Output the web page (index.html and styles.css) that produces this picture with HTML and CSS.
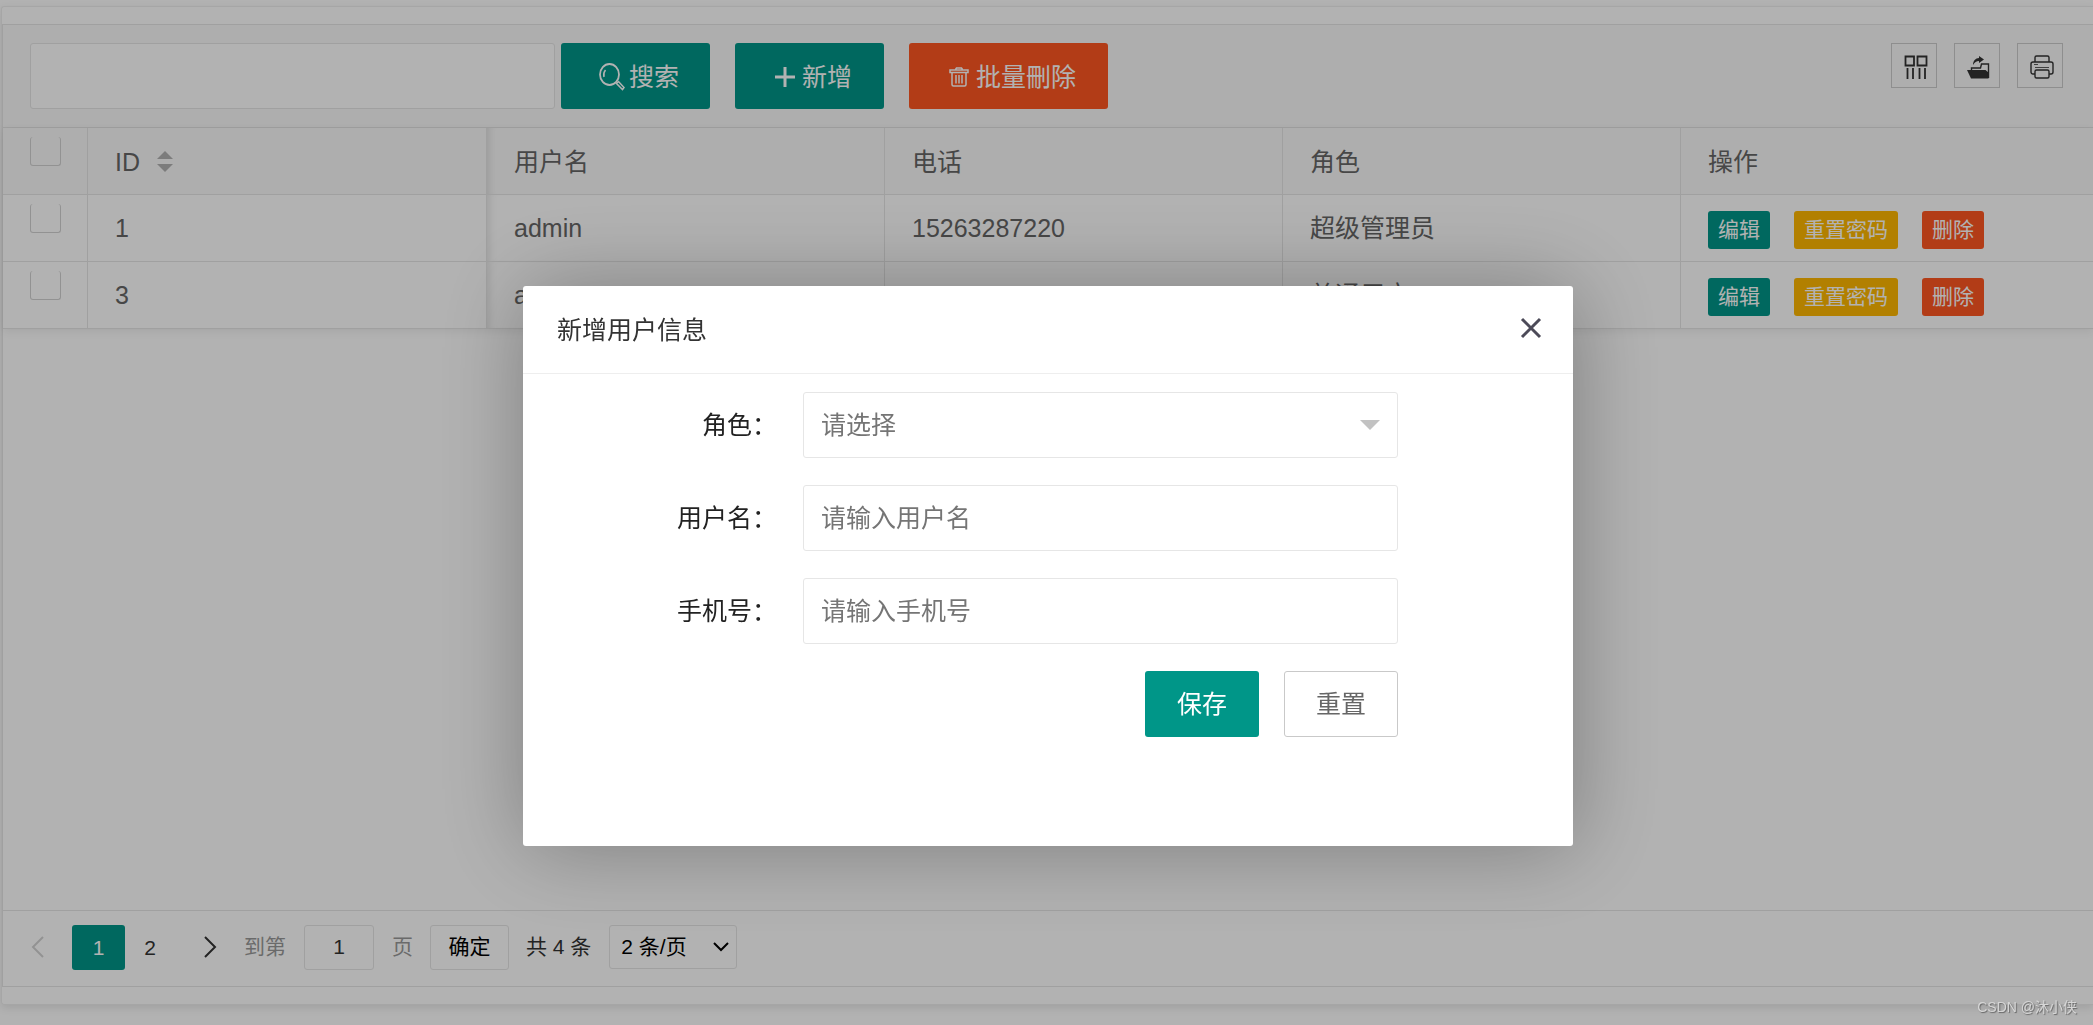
FILE: index.html
```html
<!DOCTYPE html>
<html lang="zh-CN">
<head>
<meta charset="utf-8">
<title>用户管理</title>
<link rel="stylesheet" href="styles.css">
</head>
<body>
<main class="page">
  <section class="card">
    <div class="table-view">
      <div class="toolbar">
        <form class="toolbar-left">
          <input class="input search-input" type="text" aria-label="搜索">
          <button class="btn btn-primary btn-search" type="button">
            <svg class="icon-search" viewBox="0 0 26 28" aria-hidden="true"><ellipse cx="10.500" cy="11.500" rx="9.500" ry="10.500" fill="none" stroke="currentColor" stroke-width="1.800"/><path d="M5 14a6 7 0 0 1 1.500-7M17.500 20.500l2-2 5.500 6-1.500 2z" fill="none" stroke="currentColor" stroke-width="1.500"/></svg>
            搜索
          </button>
          <button class="btn btn-primary" type="button">
            <svg class="icon-add" viewBox="0 0 20 20" aria-hidden="true"><path d="M10 0v20M0 10h20" stroke="currentColor" stroke-width="3"/></svg>
            新增
          </button>
          <button class="btn btn-danger" type="button">
            <svg class="icon-trash" viewBox="0 0 20 20" aria-hidden="true"><path d="M1 5.500V3h18v2.500zM6.500 2.500L7.500 1h5l1 1.500M3 6v11.500A1.500 1.500 0 0 0 4.500 19h11a1.500 1.500 0 0 0 1.500-1.500V6M7 8v8.500M10 8v8.500M13 8v8.500" fill="none" stroke="currentColor" stroke-width="1.500"/></svg>
            批量刪除
          </button>
        </form>
        <div class="toolbar-right">
          <button class="tool" type="button" aria-label="筛选列">
            <svg viewBox="0 0 24 24" aria-hidden="true"><path d="M1.500 1.500h8.500v9H1.500zM13.500 1.500h9v9h-9zM3.500 13v11M9 13v11M15.500 13v11M21 13v11" fill="none" stroke="currentColor" stroke-width="1.800"/></svg>
          </button>
          <button class="tool" type="button" aria-label="导出">
            <svg viewBox="0 0 24 24" aria-hidden="true"><path d="M0 15h18.500l3 2.500V23.500H4z" fill="currentColor"/><path d="M4.500 15v-2h9l1-4h7v14" fill="none" stroke="currentColor" stroke-width="1.400"/><path d="M6 10c0-4 2.500-7 6-7V1l5 3.500-5 3.500V6C9.500 6 7.500 7.500 6 10z" fill="currentColor"/></svg>
          </button>
          <button class="tool" type="button" aria-label="打印">
            <svg viewBox="0 0 24 24" aria-hidden="true"><path d="M5 7V2.500A1.500 1.500 0 0 1 6.500 1h11A1.500 1.500 0 0 1 19 2.500V7M5 19H3a2 2 0 0 1-2-2V9a2 2 0 0 1 2-2h18a2 2 0 0 1 2 2v8a2 2 0 0 1-2 2h-2M5 16.500A1.500 1.500 0 0 1 6.500 15h11a1.500 1.500 0 0 1 1.500 1.500v5a1.500 1.500 0 0 1-1.500 1.500h-11A1.500 1.500 0 0 1 5 21.500z" fill="none" stroke="currentColor" stroke-width="1.400"/><path d="M4 9.500h4M5 12.500h14" stroke="currentColor" stroke-width=".8"/></svg>
          </button>
        </div>
      </div>

      <div class="table-body">
        <table class="table">
          <colgroup><col class="col-check"><col class="col-id"><col class="col-data"><col class="col-data"><col class="col-data"><col></colgroup>
          <thead>
            <tr>
              <th class="cell-check"><input class="check" type="checkbox" aria-label="全选"></th>
              <th><span class="sortable">ID <svg class="icon-sort" viewBox="0 0 16 22" aria-hidden="true"><path d="M0 8l8-8 8 8zM0 13h16l-8 8z" fill="currentColor"/></svg></span></th>
              <th class="cell-after">用户名</th>
              <th>电话</th>
              <th>角色</th>
              <th>操作</th>
            </tr>
          </thead>
          <tbody>
            <tr>
              <td class="cell-check"><input class="check" type="checkbox" aria-label="选择 1"></td>
              <td>1</td>
              <td class="cell-after">admin</td>
              <td>15263287220</td>
              <td>超级管理员</td>
              <td><div class="actions"><button class="btn-xs btn-primary" type="button">编辑</button><button class="btn-xs btn-warm" type="button">重置密码</button><button class="btn-xs btn-danger" type="button">删除</button></div></td>
            </tr>
            <tr>
              <td class="cell-check"><input class="check" type="checkbox" aria-label="选择 3"></td>
              <td>3</td>
              <td class="cell-after">a</td>
              <td></td>
              <td>普通用户</td>
              <td><div class="actions"><button class="btn-xs btn-primary" type="button">编辑</button><button class="btn-xs btn-warm" type="button">重置密码</button><button class="btn-xs btn-danger" type="button">删除</button></div></td>
            </tr>
          </tbody>
        </table>
      </div>

      <nav class="pager" aria-label="分页">
        <button class="pager-arrow is-disabled" type="button" aria-label="上一页" disabled><svg viewBox="0 0 14 22" aria-hidden="true"><path d="M12 1L2 11l10 10" fill="none" stroke="currentColor" stroke-width="2"/></svg></button>
        <a class="pager-page is-current" href="#">1</a>
        <a class="pager-page" href="#">2</a>
        <button class="pager-arrow pager-next" type="button" aria-label="下一页"><svg viewBox="0 0 14 22" aria-hidden="true"><path d="M2 1l10 10L2 21" fill="none" stroke="currentColor" stroke-width="2"/></svg></button>
        <label class="pager-muted" for="page-no">到第</label>
        <input class="pager-input" id="page-no" type="text" value="1">
        <span class="pager-muted">页</span>
        <button class="pager-go" type="button">确定</button>
        <span class="pager-count">共 4 条</span>
        <span class="pager-limit">
          <select aria-label="每页条数"><option>2 条/页</option></select>
          <svg viewBox="0 0 16 10" aria-hidden="true"><path d="M1 1l7 7 7-7" fill="none" stroke="currentColor" stroke-width="2"/></svg>
        </span>
      </nav>
    </div>
  </section>
</main>

<div class="shade">
  <div class="modal" role="dialog" aria-labelledby="modal-title">
    <header class="modal-head">
      <h2 class="modal-title" id="modal-title">新增用户信息</h2>
      <button class="modal-close" type="button" aria-label="关闭"><svg viewBox="0 0 22 22" aria-hidden="true"><path d="M2 2l18 18M20 2L2 20" stroke="currentColor" stroke-width="3"/></svg></button>
    </header>
    <form class="form">
      <div class="form-row">
        <label for="role">角色：</label>
        <span class="select-wrap">
          <select class="input" id="role"><option>请选择</option></select>
          <svg viewBox="0 0 20 10" aria-hidden="true"><path d="M0 0h20L10 10z" fill="currentColor"/></svg>
        </span>
      </div>
      <div class="form-row">
        <label for="username">用户名：</label>
        <input class="input" id="username" type="text" placeholder="请输入用户名">
      </div>
      <div class="form-row">
        <label for="phone">手机号：</label>
        <input class="input" id="phone" type="text" placeholder="请输入手机号">
      </div>
      <div class="form-actions">
        <button class="btn btn-primary btn-form" type="button">保存</button>
        <button class="btn btn-plain btn-form" type="reset">重置</button>
      </div>
    </form>
  </div>
</div>
<div class="watermark">CSDN @沐小侠</div>
</body>
</html>
```
FILE: styles.css
```css
* {
  box-sizing: border-box;
}

body {
  margin: 0;
  background: #fff;
  color: #333;
  font: 25px/42px "Liberation Sans", "Noto Sans CJK SC", sans-serif;
}

button,
input,
select {
  margin: 0;
  font: inherit;
}

svg {
  display: block;
  flex: none;
}

/* page shell */
.page {
  display: flex;
  height: 100vh;
  padding: 6px 0 20px 1px;
  overflow: hidden;
}

.card {
  display: flex;
  flex: 1;
  padding: 17px 0;
  border: 1px solid #eee;
  border-right: 0;
  border-radius: 3px 0 0 3px;
  box-shadow: 0 3px 9px rgba(0, 0, 0, .1);
}

.table-view {
  display: flex;
  flex: 1;
  flex-direction: column;
  border: 1px solid #e6e6e6;
  border-right: 0;
}

/* toolbar */
.toolbar {
  display: flex;
  justify-content: space-between;
  align-items: flex-start;
  padding: 18px 30px 18px 27px;
  border-bottom: 1px solid #e6e6e6;
  background: #fafafa;
}

.toolbar-left {
  display: flex;
  gap: 25px;
}

.input {
  width: 100%;
  height: 66px;
  padding: 0 17px;
  border: 1px solid #e6e6e6;
  border-radius: 3px;
  outline: 0;
  background: #fff;
  color: #757575;
}

.input::placeholder {
  color: #757575;
  opacity: 1;
}

.search-input {
  width: 525px;
}

.btn {
  display: flex;
  align-items: center;
  justify-content: center;
  gap: 7px;
  height: 66px;
  padding: 2px 32px 0 40px;
  border: 0;
  border-radius: 3px;
  color: #fff;
  white-space: nowrap;
}

.btn-search {
  gap: 4px;
  margin-left: -19px;
  padding: 2px 31px 0 38px;
}

.btn-primary {
  background: #009688;
}

.btn-danger {
  background: #ff5722;
}

.btn-warm {
  background: #ffb800;
}

.btn-plain {
  border: 1px solid #c9c9c9;
  background: #fff;
  color: #666;
}

.icon-search {
  width: 26px;
  height: 28px;
}

.icon-add,
.icon-trash {
  width: 20px;
  height: 20px;
}

.toolbar-right {
  display: flex;
  gap: 17px;
}

.tool {
  display: grid;
  place-items: center;
  width: 46px;
  height: 45px;
  padding: 2px 0 0 3px;
  border: 1px solid #ccc;
  background: none;
  color: #333;
}

.tool svg {
  width: 24px;
  height: 24px;
}

/* data table */
.table-body {
  flex: 1;
  color: #666;
}

.table {
  width: 100%;
  border-collapse: separate;
  border-spacing: 0;
  table-layout: fixed;
  box-shadow: 0 2px 9px rgba(0, 0, 0, .08);
}

.col-check {
  width: 85px;
}

.col-id {
  width: 399px;
}

.col-data {
  width: 398px;
}

.table th,
.table td {
  height: 67px;
  padding: 0 27px;
  border-right: 1px solid #e6e6e6;
  border-bottom: 1px solid #e6e6e6;
  font-weight: 400;
  text-align: left;
}

.table th {
  padding-top: 2px;
  background: #fafafa;
}

.table th:last-child,
.table td:last-child {
  border-right: 0;
}

.table .cell-check {
  padding-top: 9px;
  vertical-align: top;
}

.table .cell-after {
  box-shadow: inset 9px 0 9px -7px rgba(0, 0, 0, .12);
}

.check {
  display: block;
  width: 31px;
  height: 29px;
  border: 1px solid #d2d2d2;
  border-top: 0;
  border-radius: 3px;
  appearance: none;
}

.sortable {
  display: flex;
  align-items: center;
  gap: 17px;
}

.icon-sort {
  width: 16px;
  height: 22px;
  color: #b2b2b2;
}

.actions {
  display: flex;
  gap: 24px;
  padding-top: 4px;
}

.btn-xs {
  height: 38px;
  padding: 0 10px;
  border: 0;
  border-radius: 3px;
  color: #fff;
  font-size: 21px;
  line-height: 38px;
}

/* pagination */
.pager {
  display: flex;
  align-items: center;
  height: 76px;
  padding: 0 0 3px 28px;
  border-top: 1px solid #e6e6e6;
  font-size: 21px;
}

.pager-arrow {
  width: 41px;
  padding: 0;
  border: 0;
  background: none;
  color: #333;
}

.pager-arrow svg {
  width: 14px;
  height: 22px;
}

.pager-arrow.is-disabled {
  color: #d2d2d2;
}

.pager-page {
  width: 50px;
  height: 45px;
  border-radius: 3px;
  color: #333;
  line-height: 45px;
  text-align: center;
  text-decoration: none;
}

.pager-page.is-current {
  width: 53px;
  background: #009688;
  color: #fff;
}

.pager-next {
  margin-left: 28px;
}

.pager-muted {
  color: #999;
}

.pager-input {
  width: 70px;
  height: 45px;
  margin: 0 18px;
  border: 1px solid #e6e6e6;
  border-radius: 3px;
  color: #333;
  text-align: center;
}

.pager-go {
  width: 79px;
  height: 45px;
  margin: 0 17px;
  padding: 0;
  border: 1px solid #e6e6e6;
  border-radius: 3px;
  background: #fff;
  color: #000;
}

.pager-limit {
  display: grid;
  align-items: center;
  width: 128px;
  margin-left: 18px;
  color: #000;
}

.pager-limit select {
  grid-area: 1 / 1;
  height: 44px;
  padding: 0 11px;
  border: 1px solid #e6e6e6;
  border-radius: 3px;
  background: none;
  color: inherit;
  appearance: none;
}

.pager-limit svg {
  grid-area: 1 / 1;
  justify-self: end;
  width: 16px;
  height: 10px;
  margin-right: 8px;
  pointer-events: none;
}

/* modal */
.shade {
  position: fixed;
  inset: 0;
  display: grid;
  place-items: center;
  align-content: center;
  padding: 107px 0 0 3px;
  background: rgba(0, 0, 0, .3);
}

.modal {
  width: 1050px;
  max-width: 100%;
  min-height: 560px;
  border-radius: 3px;
  background: #fff;
  box-shadow: 2px 2px 88px rgba(0, 0, 0, .3);
}

.modal-head {
  display: flex;
  align-items: center;
  justify-content: space-between;
  height: 88px;
  padding: 0 31px 0 34px;
  border-bottom: 1px solid #eee;
}

.modal-title {
  margin: 0;
  font-size: 25px;
  font-weight: 400;
}

.modal-close {
  padding: 0 0 3px;
  border: 0;
  background: none;
  color: #4c4a58;
}

.modal-close svg {
  width: 22px;
  height: 22px;
}

.form {
  display: grid;
  gap: 27px;
  padding: 18px 175px 0 0;
  color: #222;
}

.form-row {
  display: grid;
  grid-template-columns: 254px 1fr;
  column-gap: 26px;
  align-items: center;
}

.form-row label {
  text-align: right;
}

.select-wrap {
  display: grid;
  align-items: center;
}

.select-wrap .input {
  grid-area: 1 / 1;
  appearance: none;
}

.select-wrap svg {
  grid-area: 1 / 1;
  justify-self: end;
  width: 20px;
  height: 10px;
  margin-right: 18px;
  color: #c2c2c2;
  pointer-events: none;
}

.form-actions {
  display: flex;
  justify-content: flex-end;
  gap: 25px;
}

.btn-form {
  width: 114px;
  padding: 0;
}

.watermark {
  position: fixed;
  right: 16px;
  bottom: 6px;
  color: #d6d6d6;
  font-size: 14px;
  line-height: 24px;
  text-shadow: 1px 1px 1px #666;
}
```
